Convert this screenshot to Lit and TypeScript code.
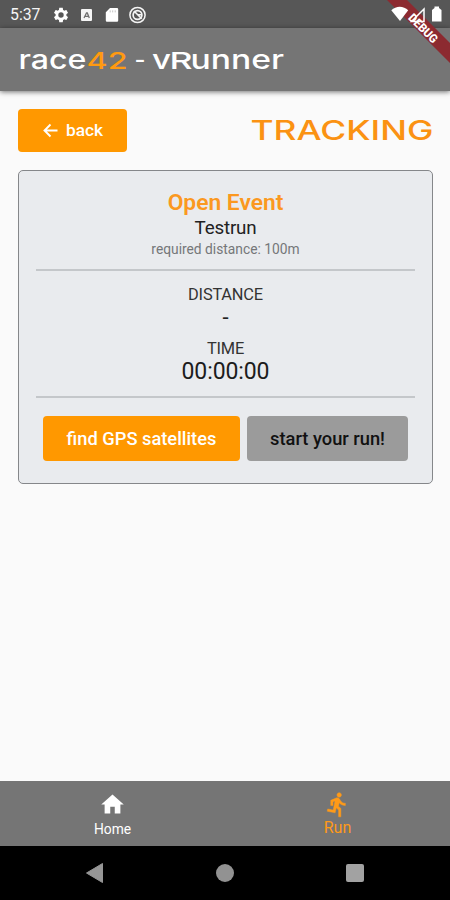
import { LitElement, html, css, svg } from "lit";
import { customElement } from "lit/decorators.js";

@customElement("app-root")
export class AppRoot extends LitElement {
  static styles = css`
    :host { display: block; font-family: Roboto, "Liberation Sans", sans-serif; }
    * { box-sizing: border-box; }
    svg { display: block; flex: none; }
    .screen { position: relative; width: 450px; height: 900px; overflow: hidden; display: flex; flex-direction: column; background: #fafafa; }
    .status { height: 28px; flex: none; background: #575757; color: #f5f5f5; display: flex; align-items: center; padding: 1px 8px 0 10px; font-size: 15.8px; }
    .clock { width: 42px; white-space: nowrap; }
    .status-left { display: flex; gap: 9px; align-items: center; }
    .appbar { height: 63px; flex: none; background: #757575; box-shadow: 0 1px 5px rgba(0,0,0,.55); position: relative; padding-left: 19px; }
    .wide { font-family: Inter, "DejaVu Sans", sans-serif; font-weight: 500; }
    .white { fill: #fff; }
    .amber { fill: #ff9a10; }
    .title-amber { fill: #fb9212; }
    .main { flex: 1; padding: 18px 17px 0 18px; }
    .heading { display: flex; justify-content: space-between; height: 43px; }
    .btn { border: 0; padding: 0; border-radius: 4px; font-family: inherit; font-weight: 500; display: flex; align-items: center; justify-content: center; background: #ff9800; color: #fff; white-space: nowrap; }
    .back { width: 109px; height: 43px; font-size: 17.3px; gap: 7px; padding-bottom: 1px; }
    .card { margin-top: 18px; height: 314px; border: 1px solid #85878a; border-radius: 5px; background: #e9ebee; padding: 17px 17px 0; text-align: center; color: #222; }
    .event { font-size: 22.8px; line-height: 29px; font-weight: 600; color: #fb9820; }
    .name { font-size: 18.8px; line-height: 23px; letter-spacing: -.2px; }
    .required { font-size: 13.8px; line-height: 19px; color: #757779; }
    .rule { height: 2px; background: #c4c7ca; }
    .gap-a { margin-top: 10px; }
    .label { font-size: 16.4px; line-height: 22px; color: #333; letter-spacing: -.2px; }
    .first { margin-top: 13px; }
    .dash { font-size: 22px; line-height: 24px; height: 32px; }
    .time { font-size: 23px; line-height: 24px; color: #1c1c1c; letter-spacing: -.1px; }
    .gap-b { margin-top: 12px; }
    .actions { display: flex; justify-content: center; gap: 7px; margin-top: 18px; }
    .find { width: 197px; height: 45px; font-size: 18.3px; }
    .start { width: 161px; height: 45px; font-size: 18.3px; background: #9b9b9b; color: #111; }
    .tabs { height: 65px; flex: none; background: #757575; display: grid; grid-template-columns: 1fr 1fr; }
    .tab { display: flex; flex-direction: column; align-items: center; color: #fff; font-size: 13.8px; padding-top: 10px; line-height: 17px; }
    .tab svg { margin-bottom: 3px; }
    .tab.on { color: #ff9a18; font-size: 16px; }
    .tab.on svg { margin-bottom: 1px; }
    .system { height: 54px; flex: none; background: #000; display: grid; grid-template-columns: 190px 70px 190px; align-items: center; justify-items: center; }
    .debug { position: absolute; right: 0; top: 0; }
    .debug-text { font: 800 12px Roboto, sans-serif; fill: #fff; }
  `;

  private wide(x: number, y: number, size: number, width: number, text: string, tone = "white") {
    return svg`<text class="wide ${tone}" x=${x} y=${y} font-size=${size} textLength=${width} lengthAdjust="spacingAndGlyphs">${text}</text>`;
  }

  render() {
    return html`
      <div class="screen">
        <div class="status">
          <span class="clock">5:37</span>
          <div class="status-left">
            <svg width="18" height="18" viewBox="0 0 24 24" fill="#fff"><path d="M19.14 12.94c.04-.3.06-.61.06-.94 0-.32-.02-.64-.07-.94l2.03-1.58c.18-.14.23-.41.12-.61l-1.92-3.32c-.12-.22-.37-.29-.59-.22l-2.39.96c-.5-.38-1.03-.7-1.62-.94l-.36-2.54c-.04-.24-.24-.41-.48-.41h-3.84c-.24 0-.43.17-.47.41l-.36 2.54c-.59.24-1.13.57-1.62.94l-2.39-.96c-.22-.08-.47 0-.59.22L2.74 8.87c-.12.21-.08.47.12.61l2.03 1.58c-.05.3-.09.63-.09.94s.02.64.07.94l-2.03 1.58c-.18.14-.23.41-.12.61l1.92 3.32c.12.22.37.29.59.22l2.39-.96c.5.38 1.03.7 1.62.94l.36 2.54c.05.24.24.41.48.41h3.84c.24 0 .44-.17.47-.41l.36-2.54c.59-.24 1.13-.56 1.62-.94l2.39.96c.22.08.47 0 .59-.22l1.92-3.32c.12-.22.07-.47-.12-.61l-2.01-1.58zM12 15.6A3.6 3.6 0 1 1 12 8.4a3.6 3.6 0 0 1 0 7.2z"/></svg>
            <svg width="16" height="16" viewBox="0 0 16 16"><rect x="2" y="2" width="11" height="12" rx="1" fill="#f5f5f5"/><path d="M5 11 7.500 6h.8L10.300 11M6 9.300h3.800" fill="none" stroke="#707070" stroke-width="1.3"/></svg>
            <svg width="16" height="16" viewBox="0 0 16 16"><path d="M6 1h7a1.200 1.200 0 0 1 1.200 1.200v11.300a1.200 1.200 0 0 1-1.200 1.200H3a1.200 1.200 0 0 1-1.200-1.200V5.300z" fill="#fff"/><path d="M6.200 3.400v2M8.700 3.400v2M11.200 3.400v2" stroke="#c4c4c4"/></svg>
            <svg width="18" height="18" viewBox="0 0 18 18" fill="none" stroke="#f5f5f5"><circle cx="8.500" cy="9" r="7.600" stroke-width="1.500"/><circle cx="8.500" cy="9" r="4.400" stroke-width="1.700"/><path d="m5 5 7.700 7.800M8.500 8.800h4" stroke-width="1.600"/></svg>
          </div>
        </div>
        <header class="appbar">
          <svg width="270" height="63" viewBox="19 28 270 63">
            ${this.wide(18.5, 68.8, 26, 68, "race")}
            ${this.wide(86.5, 68.8, 23, 41, "42", "amber")}
            ${this.wide(134.5, 68, 22.8, 11, "-")}
            ${this.wide(152, 68.8, 26, 19, "v")}
            ${this.wide(169.500, 68.8, 23, 23, "R")}
            ${this.wide(190.5, 68.8, 26, 93.5, "unner")}
          </svg>
        </header>
        <main class="main">
          <div class="heading">
            <button class="btn back">
              <svg width="17" height="17" viewBox="0 0 17 17" fill="none" stroke="#fff" stroke-width="1.9"><path d="M15.500 8.500H2.500M8.500 2.500l-6 6 6 6"/></svg>back
            </button>
            <svg width="184" height="42" viewBox="249 109 184 42">${this.wide(250.5, 139.6, 27, 183, "TRACKING", "title-amber")}</svg>
          </div>
          <section class="card">
            <div class="event">Open Event</div>
            <div class="name">Testrun</div>
            <div class="required">required distance: 100m</div>
            <div class="rule gap-a"></div>
            <div class="label first">DISTANCE</div>
            <div class="dash">-</div>
            <div class="label">TIME</div>
            <div class="time">00:00:00</div>
            <div class="rule gap-b"></div>
            <div class="actions">
              <button class="btn find">find GPS satellites</button>
              <button class="btn start">start your run!</button>
            </div>
          </section>
        </main>
        <nav class="tabs">
          <div class="tab">
            <svg width="27" height="27" viewBox="0 0 24 24" fill="#fff"><path d="M10 20v-6h4v6h5v-8h3L12 3 2 12h3v8z"/></svg>
            <span>Home</span>
          </div>
          <div class="tab on">
            <svg width="27" height="27" viewBox="0 0 24 24" fill="#ff9a18" stroke="#ff9a18" stroke-width=".4"><path d="M13.49 5.48c1.1 0 2-.9 2-2s-.9-2-2-2-2 .9-2 2 .9 2 2 2zm-3.6 13.9 1-4.4 2.1 2v6h2v-7.5l-2.1-2 .6-3c1.3 1.5 3.3 2.5 5.500 2.500v-2c-1.900 0-3.500-1-4.300-2.400l-1-1.600c-.4-.6-1-1-1.700-1-.3 0-.5.1-.8.1l-5.200 2.200v4.700h2v-3.400l1.800-.7-1.600 8.100-4.900-1-.4 2z"/></svg>
            <span>Run</span>
          </div>
        </nav>
        <div class="system">
          <svg width="20" height="22" viewBox="0 0 20 22"><path d="M17.500 1.500v19L1.500 11z" fill="#969696" stroke="#969696" stroke-linejoin="round"/></svg>
          <svg width="20" height="20"><circle cx="10" cy="10" r="9" fill="#929292"/></svg>
          <svg width="20" height="20"><rect x="1" y="1" width="18" height="18" rx="2" fill="#a2a2a2"/></svg>
        </div>
        <svg class="debug" width="80" height="80" viewBox="370 0 80 80">
          <path d="M387 0h20l43 43v20z" fill="#8c2a30"/>
          <text class="debug-text" transform="translate(407.500 18.500) rotate(45)" textLength="36" lengthAdjust="spacingAndGlyphs">DEBUG</text>
          <path d="M391.300 10.200C396 5.500 403.500 5.500 408.200 10.200L400 21z" fill="#fff"/>
          <path d="M424 9v12.500h-12.500z" fill="none" stroke="#fff" stroke-width="1.500"/>
          <path d="M434.500 8V6.500h4.500V8l2.500 2v11.500H432V10z" fill="#fff"/>
        </svg>
      </div>`;
  }
}
